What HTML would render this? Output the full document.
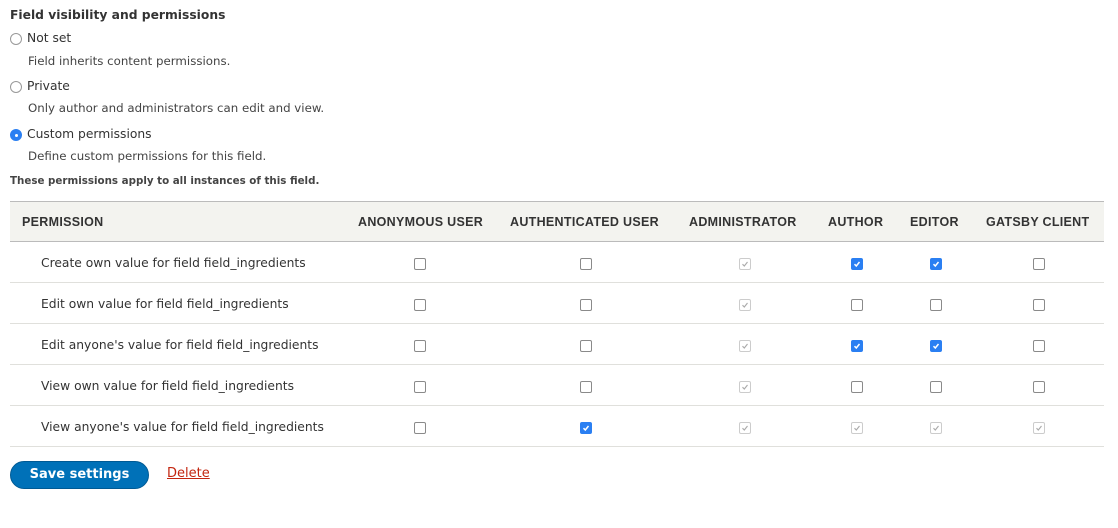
<!DOCTYPE html>
<html><head><style>
body{margin:0;background:#fff;font-family:"DejaVu Sans",sans-serif;color:#222;width:1118px;height:528px;position:relative;overflow:hidden}
.a{position:absolute;white-space:nowrap}
.t{font-size:12.3px;color:#333}
.d{font-size:11.8px;color:#444}
.r{position:absolute;width:12px;height:12px;border:1px solid #999;border-radius:50%;box-sizing:border-box}
.hdr{position:absolute;left:10px;top:201px;width:1094px;height:41px;background:#f3f3ef;border-top:1px solid #bbb;border-bottom:1px solid #bbb;box-sizing:border-box}
.h{position:absolute;top:215px;font-family:"Liberation Sans",sans-serif;font-size:12.5px;font-weight:bold;color:#333;white-space:nowrap;letter-spacing:.3px}
.line{position:absolute;left:10px;width:1094px;height:1px;background:#e0e0dc}
.c{position:absolute;width:12px;height:12px;box-sizing:border-box;border:1px solid #8a8a8a;border-radius:2px;background:#fff}
.c.on{background:#2a7ff2;border-color:#2a7ff2}
.c.dis{border-color:#ccc}
.c svg{position:absolute;left:1px;top:1px}
</style></head><body>
<div class="a" style="left:10px;top:8px;font-size:12.3px;font-weight:bold;color:#333">Field visibility and permissions</div>
<div class="r" style="left:10px;top:33px"></div><div class="a t" style="left:27px;top:31px">Not set</div>
<div class="a d" style="left:28px;top:54px">Field inherits content permissions.</div>
<div class="r" style="left:10px;top:81px"></div><div class="a t" style="left:27px;top:79px">Private</div>
<div class="a d" style="left:28px;top:101px">Only author and administrators can edit and view.</div>
<div class="r" style="left:10px;top:129px;background:#2a7ff2;border-color:#2a7ff2"><div style="position:absolute;left:4px;top:4px;width:3px;height:3px;border-radius:50%;background:#fff"></div></div>
<div class="a t" style="left:27px;top:127px">Custom permissions</div>
<div class="a d" style="left:28px;top:149px">Define custom permissions for this field.</div>
<div class="a" style="left:10px;top:175px;font-size:10.3px;font-weight:bold;color:#444">These permissions apply to all instances of this field.</div>
<div class="hdr"></div>
<div class="h" style="left:22px">PERMISSION</div>
<div class="h" style="left:358px">ANONYMOUS USER</div>
<div class="h" style="left:510px">AUTHENTICATED USER</div>
<div class="h" style="left:689px">ADMINISTRATOR</div>
<div class="h" style="left:828px">AUTHOR</div>
<div class="h" style="left:910px">EDITOR</div>
<div class="h" style="left:986px">GATSBY CLIENT</div>
<div id="rows"></div>
<div class="a" style="left:10px;top:461px;width:139px;height:28px;border-radius:14px;background:#0071b8;border:1px solid #005a94;box-sizing:border-box;color:#fff;font-weight:bold;font-size:13px;text-align:center;line-height:26px">Save settings</div>
<div class="a" style="left:167px;top:466px;font-size:13px;color:#c3250f;text-decoration:underline">Delete</div>
<script>
(function(){
var labels=["Create own value for field field_ingredients","Edit own value for field field_ingredients","Edit anyone's value for field field_ingredients","View own value for field field_ingredients","View anyone's value for field field_ingredients"];
var xs=[420,586,745,857,936,1039];
var st=[[0,0,2,1,1,0],[0,0,2,0,0,0],[0,0,2,1,1,0],[0,0,2,0,0,0],[0,1,2,2,2,2]];
var h="";
for(var i=0;i<5;i++){var y=242+i*41;
h+='<div class="a t" style="left:41px;top:'+(y+14)+'px">'+labels[i]+'</div>';
h+='<div class="line" style="top:'+(y+40)+'px"></div>';
for(var j=0;j<6;j++){var s=st[i][j];var cls=s==1?"c on":(s==2?"c dis":"c");
var chk=s==1?'<svg width="8" height="8"><path d="M1.5 4.2L3.3 6L6.5 2" stroke="#fff" stroke-width="1.5" fill="none"/></svg>':(s==2?'<svg width="8" height="8"><path d="M1.5 4.2L3.3 6L6.5 2" stroke="#aaa" stroke-width="1.1" fill="none"/></svg>':'');
h+='<div class="'+cls+'" style="left:'+(xs[j]-6)+'px;top:'+(y+16)+'px">'+chk+'</div>';}}
document.getElementById("rows").innerHTML=h;
})();
</script>
</body></html>
